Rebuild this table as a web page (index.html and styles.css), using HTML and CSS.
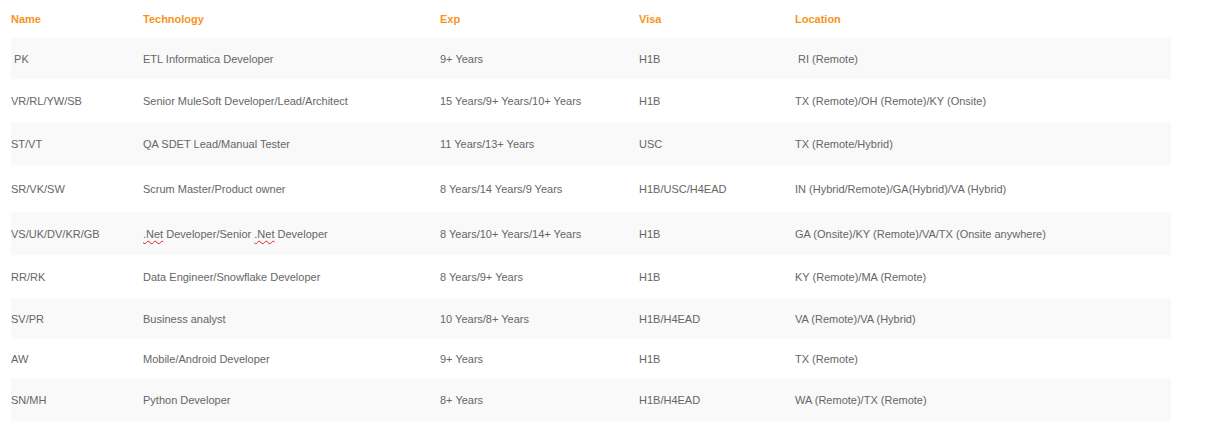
FILE: index.html
```html
<!DOCTYPE html>
<html>
<head>
<meta charset="utf-8">
<link rel="stylesheet" href="styles.css">
</head>
<body>
<div class="wrap">
<table class="grid">
  <colgroup>
    <col class="c-name"><col class="c-tech"><col class="c-exp"><col class="c-visa"><col class="c-loc">
  </colgroup>
  <thead>
    <tr class="h38"><th>Name</th><th>Technology</th><th>Exp</th><th>Visa</th><th>Location</th></tr>
  </thead>
  <tbody>
    <tr class="odd h41"><td>&nbsp;PK</td><td>ETL Informatica Developer</td><td>9+ Years</td><td>H1B</td><td>&nbsp;RI (Remote)</td></tr>
    <tr class="h43"><td>VR/RL/YW/SB</td><td>Senior MuleSoft Developer/Lead/Architect</td><td>15 Years/9+ Years/10+ Years</td><td>H1B</td><td>TX (Remote)/OH (Remote)/KY (Onsite)</td></tr>
    <tr class="odd h43"><td>ST/VT</td><td>QA SDET Lead/Manual Tester</td><td>11 Years/13+ Years</td><td>USC</td><td>TX (Remote/Hybrid)</td></tr>
    <tr class="h47"><td>SR/VK/SW</td><td>Scrum Master/Product owner</td><td>8 Years/14 Years/9 Years</td><td>H1B/USC/H4EAD</td><td>IN (Hybrid/Remote)/GA(Hybrid)/VA (Hybrid)</td></tr>
    <tr class="odd h43"><td>VS/UK/DV/KR/GB</td><td><span class="spell">.Net</span> Developer/Senior <span class="spell">.Net</span> Developer</td><td>8 Years/10+ Years/14+ Years</td><td>H1B</td><td>GA (Onsite)/KY (Remote)/VA/TX (Onsite anywhere)</td></tr>
    <tr class="h43"><td>RR/RK</td><td>Data Engineer/Snowflake Developer</td><td>8 Years/9+ Years</td><td>H1B</td><td>KY (Remote)/MA (Remote)</td></tr>
    <tr class="odd h41"><td>SV/PR</td><td>Business analyst</td><td>10 Years/8+ Years</td><td>H1B/H4EAD</td><td>VA (Remote)/VA (Hybrid)</td></tr>
    <tr class="h39"><td>AW</td><td>Mobile/Android Developer</td><td>9+ Years</td><td>H1B</td><td>TX (Remote)</td></tr>
    <tr class="odd h43"><td>SN/MH</td><td>Python Developer</td><td>8+ Years</td><td>H1B/H4EAD</td><td>WA (Remote)/TX (Remote)</td></tr>
  </tbody>
</table>
</div>
</body>
</html>
```
FILE: styles.css
```css
html, body {
  margin: 0;
  padding: 0;
  background: #ffffff;
}
.wrap {
  padding-left: 11px;
}
.grid {
  width: 1160px;
  border-collapse: collapse;
  table-layout: fixed;
  font-family: "Liberation Sans", Arial, sans-serif;
  font-size: 11px;
  color: #666666;
}
.c-name { width: 132px; }
.c-tech { width: 297px; }
.c-exp { width: 199px; }
.c-visa { width: 156px; }
.c-loc { width: 376px; }
.grid th, .grid td {
  padding: 0;
  text-align: left;
  vertical-align: middle;
  white-space: nowrap;
}
.grid th {
  color: #f7941d;
  font-weight: bold;
}
.odd { background: #f9f9f9; }
.h38 { height: 38px; }
.h39 { height: 39px; }
.h41 { height: 41px; }
.h43 { height: 43px; }
.h47 { height: 47px; }
.spell {
  text-decoration: underline wavy #e02020;
  text-decoration-thickness: 1px;
  text-underline-offset: 2px;
}
```
